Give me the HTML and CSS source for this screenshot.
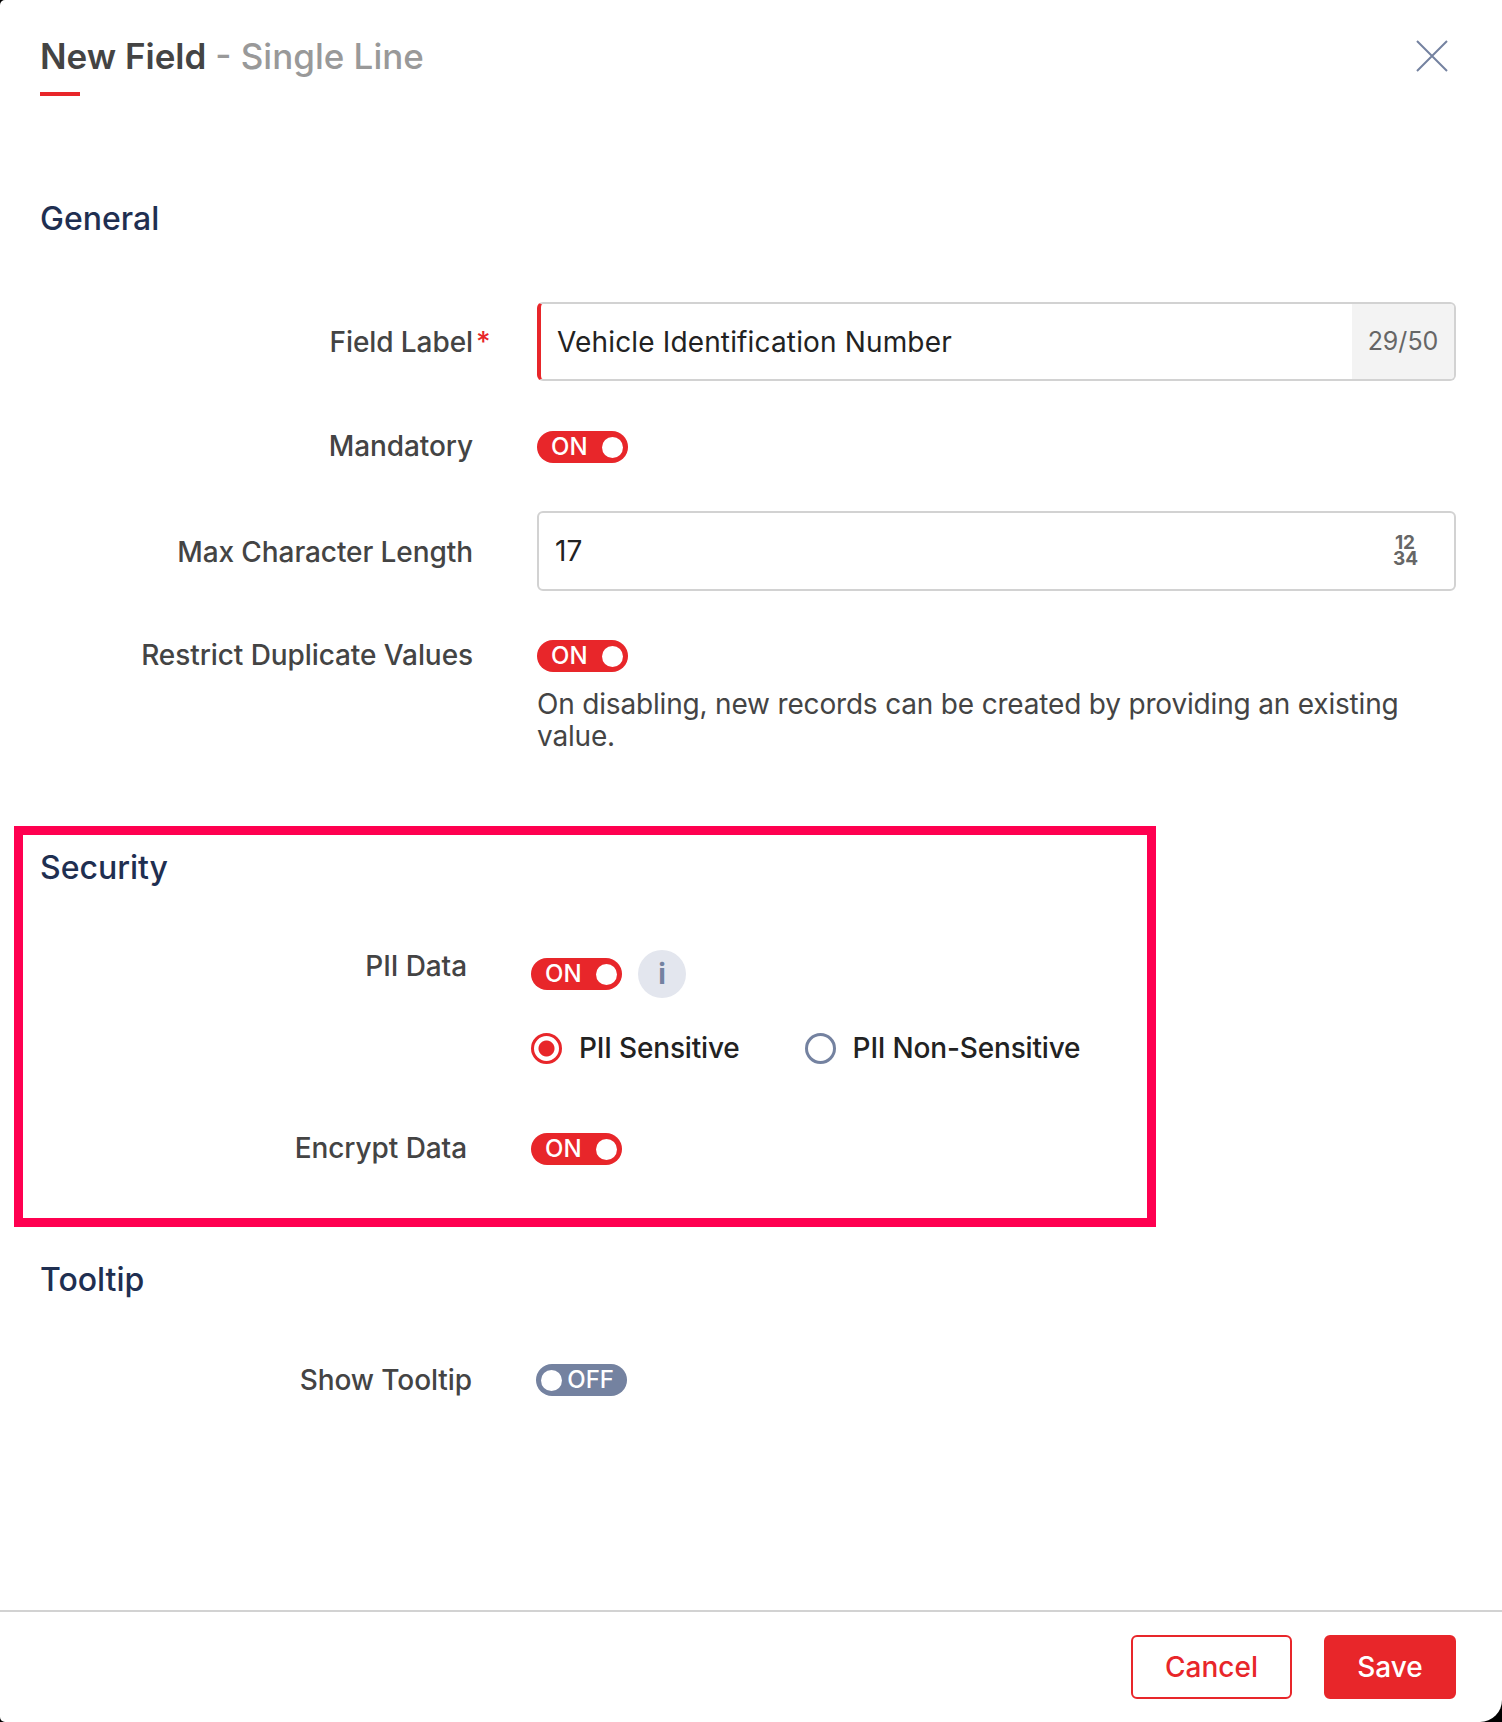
FILE: index.html
```html
<!DOCTYPE html>
<html lang="en">
<head>
	<meta charset="UTF-8">
	<title>New Field - Single Line</title>
	<link rel="stylesheet" href="styles.css">
</head>
<body>
	<div class="dialog">
		<div class="head">
			<h2 class="title">New Field <span>- Single Line</span></h2>
			<svg class="close" width="32" height="32" viewBox="0 0 32 32"><path d="M1 1L31 31M31 1L1 31" fill="none" stroke="#7482a0" stroke-width="2"/></svg>
		</div>
		<div class="body">
			<div class="section general">
				<h3>General</h3>
				<div class="row row-label">
					<label>Field Label<i>*</i></label>
					<div class="input required">
						<span class="value">Vehicle Identification Number</span>
						<span class="count">29/50</span>
					</div>
				</div>
				<div class="row row-mandatory">
					<label>Mandatory</label>
					<div class="toggle"><b>ON</b><u></u></div>
				</div>
				<div class="row row-max">
					<label>Max Character Length</label>
					<div class="input">
						<span class="value plain">17</span>
						<span class="num">12 34</span>
					</div>
				</div>
				<div class="row row-dup">
					<label>Restrict Duplicate Values</label>
					<div class="ctrl">
						<div class="toggle"><b>ON</b><u></u></div>
						<p class="hint">On disabling, new records can be created by providing an existing value.</p>
					</div>
				</div>
			</div>
			<div class="section security">
				<h3>Security</h3>
				<div class="row row-pii">
					<label>PII Data</label>
					<div class="ctrl">
						<div class="pii-top">
							<div class="toggle"><b>ON</b><u></u></div>
							<span class="info">i</span>
						</div>
						<div class="radios">
							<span class="radio on"><em></em>PII Sensitive</span>
							<span class="radio"><em></em>PII Non-Sensitive</span>
						</div>
					</div>
				</div>
				<div class="row row-encrypt">
					<label>Encrypt Data</label>
					<div class="toggle"><b>ON</b><u></u></div>
				</div>
			</div>
			<div class="section tooltip">
				<h3>Tooltip</h3>
				<div class="row row-show">
					<label>Show Tooltip</label>
					<div class="toggle off"><u></u><b>OFF</b></div>
				</div>
			</div>
		</div>
		<div class="foot">
			<button class="btn cancel">Cancel</button>
			<button class="btn save">Save</button>
		</div>
	</div>
</body>
</html>
```

FILE: styles.css
```css
html,body{
	margin: 0;
	padding: 0;
	background: #000;
}
body{
	font-family: "Inter", "Liberation Sans", sans-serif;
	color: #444;
}
.dialog{
	width: 1502px;
	height: 1722px;
	background: #fff;
	border-radius: 5px 0 22px 5px;
	display: flex;
	flex-direction: column;
	overflow: hidden;
}
.head{
	display: flex;
	justify-content: space-between;
	align-items: flex-start;
	padding: 38px 54px 0 40px;
	height: 147px;
	box-sizing: border-box;
}
.title{
	margin: 0;
	font-size: 35px;
	line-height: 36px;
	font-weight: 600;
	color: #444;
	position: relative;
	padding-bottom: 22px;
}
.title span{
	color: #999;
	font-weight: 500;
}
.title:after{
	content: "";
	position: absolute;
	left: 0;
	bottom: 0;
	width: 40px;
	height: 4px;
	background: #e8262a;
}
.close{
	margin-top: 2px;
}
.body{
	flex: 1;
}
.section h3{
	margin: 0;
	font-size: 32px;
	line-height: 40px;
	font-weight: 500;
	color: #1f2f51;
}
.general{
	padding: 52px 46px 0 40px;
}
.row{
	display: flex;
	align-items: flex-start;
}
.row label{
	width: 433px;
	text-align: right;
	font-size: 28px;
	line-height: 34px;
	font-weight: 500;
	letter-spacing: -0.08px;
	margin-right: 64px;
	position: relative;
	flex: none;
}
.row label i{
	position: absolute;
	left: 100%;
	margin-left: 3px;
	color: #e8262a;
	font-style: normal;
}
.ctrl{
	flex: 1;
}
.input{
	flex: 1;
	height: 79px;
	box-sizing: border-box;
	border: 2px solid #d2d2d2;
	border-radius: 6px;
	display: flex;
	align-items: stretch;
	justify-content: space-between;
	overflow: hidden;
}
.input.required{
	border-left: 4px solid #e8262a;
}
.value{
	font-size: 28px;
	line-height: 77px;
	letter-spacing: 0.15px;
	color: #222;
	padding-left: 16px;
}
.count{
	width: 102px;
	background: #f3f3f3;
	text-align: center;
	font-size: 25px;
	line-height: 75px;
	color: #666;
}
.num{
	width: 24px;
	font-size: 19px;
	line-height: 16px;
	font-weight: 700;
	color: #666;
	text-align: center;
	padding: 22px 37px 0 0;
}
.toggle{
	width: 91px;
	height: 32px;
	border-radius: 16px;
	background: #e8262a;
	color: #fff;
	display: flex;
	align-items: center;
	justify-content: space-between;
	padding: 0 5.5px 0 14px;
	box-sizing: border-box;
}
.toggle b{
	font-size: 24px;
	line-height: 32px;
	font-weight: 500;
}
.toggle u{
	width: 21px;
	height: 21px;
	border-radius: 50%;
	background: #fff;
	flex: none;
}
.toggle.off{
	background: #7482a0;
	padding: 0 13px 0 5px;
}
.row-label{
	margin-top: 63px;
}
.row-label label{
	line-height: 81px;
	height: 79px;
}
.row-mandatory{
	margin-top: 50px;
}
.row-mandatory label{
	margin-top: -2px;
}
.row-max{
	margin-top: 48px;
}
.row-max .input{
	height: 80px;
}
.row-max label{
	line-height: 82px;
}
.row-dup{
	margin-top: 47px;
}
.row-dup label{
	margin-top: -2px;
}
.hint{
	margin: 16px 0 0;
	font-size: 28px;
	line-height: 32px;
	letter-spacing: -0.18px;
	color: #444;
}
.security{
	margin: 74px 346px 0 14px;
	border: 9px solid #ff0050;
	padding: 13px 0 0 17px;
	height: 401px;
	box-sizing: border-box;
}
.row-pii{
	margin-top: 62px;
}
.row-pii label,.row-encrypt label{
	width: 427px;
}
.row-pii label{
	margin-top: -1px;
}
.pii-top{
	display: flex;
	align-items: center;
	gap: 16px;
}
.info{
	width: 48px;
	height: 48px;
	border-radius: 50%;
	background: #e3e6ee;
	color: #7482a0;
	font-size: 28px;
	font-weight: 700;
	line-height: 48px;
	text-align: center;
}
.radios{
	display: flex;
	gap: 65px;
	margin-top: 34px;
}
.radio{
	display: flex;
	align-items: center;
	gap: 17px;
	font-size: 28px;
	line-height: 32px;
	font-weight: 500;
	letter-spacing: -0.17px;
	color: #222;
}
.radio em{
	width: 31px;
	height: 31px;
	box-sizing: border-box;
	border: 3px solid #7482a0;
	border-radius: 50%;
	background: #fff;
}
.radio.on em{
	border-color: #e8262a;
	background: radial-gradient(circle, #e8262a 0 7.5px, #fff 8.5px);
}
.row-encrypt{
	margin-top: 69px;
}
.row-encrypt label{
	margin-top: -2px;
}
.tooltip{
	padding: 33px 0 0 40px;
}
.row-show{
	margin-top: 64px;
}
.row-show label{
	width: 432px;
	margin-top: -1px;
}
.foot{
	border-top: 2px solid #d2d2d2;
	height: 112px;
	box-sizing: border-box;
	display: flex;
	justify-content: flex-end;
	align-items: flex-start;
	gap: 32px;
	padding: 23px 46px 0 0;
}
.btn{
	height: 64px;
	font-family: inherit;
	font-size: 28px;
	font-weight: 500;
	line-height: 58px;
	border-radius: 6px;
	border: 2px solid #e8262a;
	box-sizing: border-box;
	padding: 0;
}
.cancel{
	width: 161px;
	background: #fff;
	color: #e8262a;
}
.save{
	width: 132px;
	background: #e8262a;
	color: #fff;
}
```
